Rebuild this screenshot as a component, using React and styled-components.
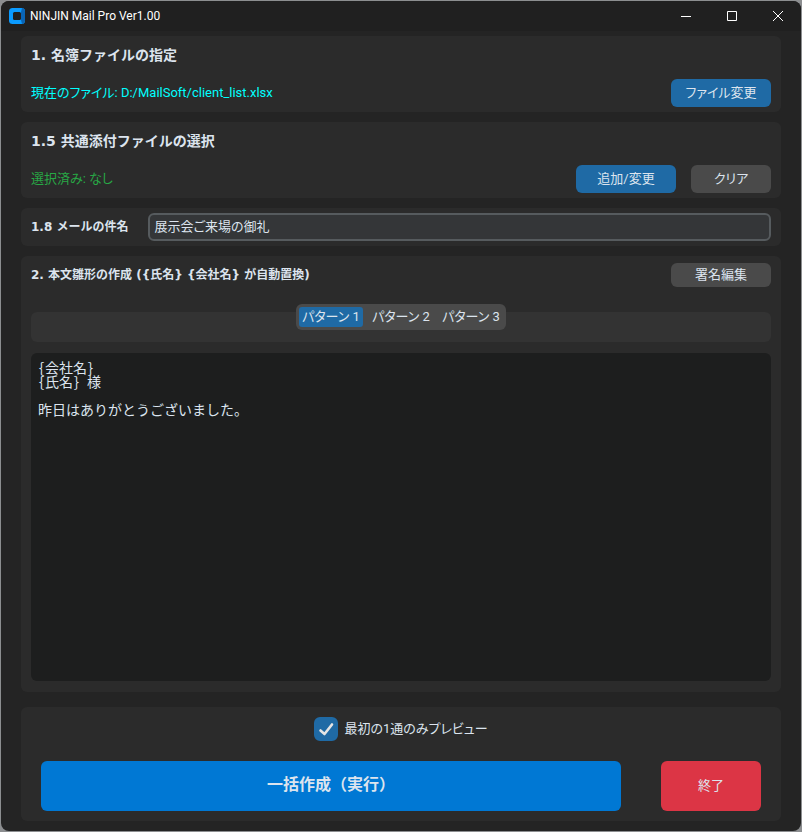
import React, { useState } from "react";
import styled, { createGlobalStyle } from "styled-components";

const GlobalStyle = createGlobalStyle`
  * {
    box-sizing: border-box;
  }
  body {
    margin: 0;
    background: #8c8e90;
    color: #dce4ee;
    font-family: Roboto, "Noto Sans CJK JP", sans-serif;
    font-size: 13px;
    font-weight: 400;
    font-feature-settings: "palt";
  }
  button,
  input,
  textarea {
    margin: 0;
    font: inherit;
    font-feature-settings: inherit;
    color: inherit;
  }
`;

const Page = styled.div`
  min-height: 100vh;
  padding: 1px;
  display: flex;
`;

const Window = styled.div`
  flex: 1;
  display: flex;
  flex-direction: column;
  overflow: hidden;
  border-radius: 8px;
  background: #242424;
`;

const TitleBar = styled.header`
  height: 30px;
  padding-left: 8px;
  display: flex;
  align-items: center;
  gap: 5px;
  background: #202020;
  color: #fff;

  h1 {
    flex: 1;
    margin: 0;
    font-family: Roboto, sans-serif;
    font-size: 12px;
    font-weight: 400;
    font-feature-settings: normal;
  }
`;

const WindowButton = styled.button`
  width: 46px;
  height: 30px;
  padding: 0;
  border: none;
  display: flex;
  align-items: center;
  justify-content: center;
  background: transparent;
`;

const Content = styled.main`
  flex: 1;
  padding: 5px 20px 10px;
  display: flex;
  flex-direction: column;
  gap: 10px;
`;

const Card = styled.section`
  padding: 5px 10px;
  display: flex;
  flex-direction: column;
  gap: 10px;
  border-radius: 6px;
  background: #2b2b2b;
`;

const EditorCard = styled(Card)`
  flex: 1;
  padding: 7px 10px 11px;
`;

const ActionCard = styled(Card)`
  margin-top: 5px;
  padding: 10px 20px;
  gap: 20px;
`;

const Heading = styled.h2`
  margin: 0;
  font-family: "DejaVu Sans", "Noto Sans CJK JP", sans-serif;
  font-size: ${(p) => (p.$small ? 12 : 14)}px;
  font-weight: 700;
  font-feature-settings: normal;
  line-height: ${(p) => (p.$small ? 24 : 28)}px;
`;

const Row = styled.div`
  display: flex;
  align-items: center;
  gap: ${(p) => p.$gap || 15}px;
`;

const Status = styled.span`
  flex: 1;
  line-height: 28px;
  color: ${(p) => p.$color};
`;

const tones = {
  blue: "#1f6aa5",
  gray: "#4a4a4a",
  primary: "#0078d4",
  danger: "#dc3545",
};

const Button = styled.button`
  width: ${(p) => p.$width || 100}px;
  height: ${(p) => p.$height || 28}px;
  padding: 0 0 4px;
  border: none;
  border-radius: 6px;
  background: ${(p) => tones[p.$tone]};
`;

const RunButton = styled(Button)`
  flex: 1;
  padding-bottom: 6px;
  font-family: "Noto Sans CJK JP", sans-serif;
  font-size: 16px;
  font-weight: 700;
  font-feature-settings: normal;
`;

const SubjectInput = styled.input`
  flex: 1;
  min-width: 0;
  height: 28px;
  padding: 0 4px 4px;
  border: 2px solid #565b5e;
  border-radius: 6px;
  outline: none;
  background: #343638;
`;

const Spread = styled(Row)`
  justify-content: space-between;
`;

const TabArea = styled.div`
  position: relative;
  height: 38px;
  margin: 7px 0 1px;
  display: flex;
  justify-content: center;
  align-items: flex-start;

  &::before {
    content: "";
    position: absolute;
    inset: 8px 0 0;
    border-radius: 6px;
    background: #333333;
  }
`;

const TabList = styled.div`
  position: relative;
  padding: 3px;
  display: flex;
  gap: 6px;
  border-radius: 6px;
  background: #4a4a4a;
`;

const Tab = styled.button`
  width: 64px;
  height: 20px;
  padding: 0;
  border: none;
  border-radius: 3px;
  line-height: 20px;
  white-space: nowrap;
  background: ${(p) => (p.$active ? "#1f6aa5" : "transparent")};
`;

const Editor = styled.textarea`
  flex: 1;
  width: 100%;
  padding: 7px;
  border: none;
  border-radius: 6px;
  outline: none;
  resize: none;
  background: #1d1e1e;
  font-family: "Noto Sans CJK JP", monospace;
  font-size: 14px;
  line-height: 14px;
  font-feature-settings: "hwid";
`;

const CheckLabel = styled.label`
  align-self: center;
  display: grid;
  grid-template-columns: 24px auto;
  align-items: center;
  column-gap: 6px;
  line-height: 24px;

  input,
  svg {
    grid-area: 1 / 1;
  }
  input {
    width: 24px;
    height: 24px;
    appearance: none;
    border: 3px solid #949a9f;
    border-radius: 6px;
  }
  input:checked {
    border-color: #1f6aa5;
    background: #1f6aa5;
  }
  svg {
    pointer-events: none;
    visibility: hidden;
  }
  input:checked + svg {
    visibility: visible;
  }
`;

const AppIcon = () => (
  <svg width="16" height="16" viewBox="0 0 16 16" aria-hidden="true">
    <rect width="16" height="16" rx="3.5" fill="#0b9bff" />
    <path d="M12 4l1-4a3.5 3.5 0 0 1 3 3.5v9a3.5 3.5 0 0 1-3 3.5l-1-4z" fill="#0a64b4" />
    <rect x="4" y="4" width="8" height="8" rx="1.5" fill="#202020" />
  </svg>
);

const glyphs = {
  最小化: "M0 5.5h10",
  最大化: "M0.5 0.5h9v9h-9z",
  閉じる: "M0 0l10 10M10 0L0 10",
};

const patterns = ["パターン 1", "パターン 2", "パターン 3"];

const App = () => {
  const [active, setActive] = useState(0);
  const [preview, setPreview] = useState(true);

  return (
    <Page>
      <GlobalStyle />
      <Window>
        <TitleBar>
          <AppIcon />
          <h1>NINJIN Mail Pro Ver1.00</h1>
          <Row $gap="0">
            {Object.entries(glyphs).map(([name, d]) => (
              <WindowButton key={name} aria-label={name}>
                <svg width="10" height="10" viewBox="0 0 10 10" overflow="visible">
                  <path d={d} fill="none" stroke="#fff" />
                </svg>
              </WindowButton>
            ))}
          </Row>
        </TitleBar>
        <Content>
          <Card>
            <Heading>1. 名簿ファイルの指定</Heading>
            <Row>
              <Status $color="#00ffff">
                現在のファイル: D:/MailSoft/client_list.xlsx
              </Status>
              <Button $tone="blue">ファイル変更</Button>
            </Row>
          </Card>
          <Card>
            <Heading>1.5 共通添付ファイルの選択</Heading>
            <Row>
              <Status $color="#28a745">選択済み: なし</Status>
              <Button $tone="blue">追加/変更</Button>
              <Button $tone="gray" $width={80}>
                クリア
              </Button>
            </Row>
          </Card>
          <Card>
            <Row $gap={20}>
              <Heading as="label" htmlFor="subject" $small>
                1.8 メールの件名
              </Heading>
              <SubjectInput id="subject" defaultValue="展示会ご来場の御礼" />
            </Row>
          </Card>
          <EditorCard>
            <Spread>
              <Heading $small>
                2. 本文雛形の作成 ({"{氏名} {会社名}"} が自動置換)
              </Heading>
              <Button $tone="gray" $height={24}>
                署名編集
              </Button>
            </Spread>
            <TabArea>
              <TabList role="tablist">
                {patterns.map((name, i) => (
                  <Tab
                    key={name}
                    role="tab"
                    aria-selected={i === active}
                    $active={i === active}
                    onClick={() => setActive(i)}
                  >
                    {name}
                  </Tab>
                ))}
              </TabList>
            </TabArea>
            <Editor
              aria-label="本文"
              spellCheck={false}
              defaultValue={
                "{会社名}\n{氏名} 様\n\n昨日はありがとうございました。"
              }
            />
          </EditorCard>
          <ActionCard>
            <CheckLabel>
              <input
                type="checkbox"
                checked={preview}
                onChange={(e) => setPreview(e.target.checked)}
              />
              <svg width="24" height="24" viewBox="0 0 24 24">
                <path
                  d="M6.5 13.5l4 3.5 7.5-9.5"
                  fill="none"
                  stroke="#e5e5e5"
                  strokeWidth="2.6"
                  strokeLinecap="round"
                  strokeLinejoin="round"
                />
              </svg>
              <span>最初の1通のみプレビュー</span>
            </CheckLabel>
            <Row $gap={40}>
              <RunButton $tone="primary" $height={50}>
                一括作成（実行）
              </RunButton>
              <Button $tone="danger" $height={50}>
                終了
              </Button>
            </Row>
          </ActionCard>
        </Content>
      </Window>
    </Page>
  );
};

export default App;
